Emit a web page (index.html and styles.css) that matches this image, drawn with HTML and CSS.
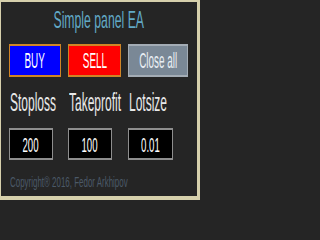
FILE: index.html
```html
<!DOCTYPE html>
<html>
<head>
<meta charset="utf-8">
<link rel="stylesheet" href="styles.css">
</head>
<body>
<div class="panel">
  <div class="title"><span class="t t-title">Simple panel EA</span></div>
  <div class="row buttons">
    <div class="btn btn-buy"><span class="t t-btn">BUY</span></div>
    <div class="btn btn-sell"><span class="t t-btn">SELL</span></div>
    <div class="btn btn-close"><span class="t t-btn">Close all</span></div>
  </div>
  <div class="row labels">
    <div class="label"><span class="t t-label">Stoploss</span></div>
    <div class="label"><span class="t t-label">Takeprofit</span></div>
    <div class="label"><span class="t t-label">Lotsize</span></div>
  </div>
  <div class="row inputs">
    <div class="field"><span class="t t-field">200</span></div>
    <div class="field"><span class="t t-field">100</span></div>
    <div class="field field-wide"><span class="t t-field">0.01</span></div>
  </div>
  <div class="copy"><span class="t t-copy">Copyright® 2016, Fedor Arkhipov</span></div>
</div>
</body>
</html>
```

FILE: styles.css
```css
html, body {
  margin: 0;
  padding: 0;
  overflow: hidden;
  background: #252525;
}

.panel {
  width: 200px;
  height: 200px;
  box-sizing: border-box;
  background: #252525;
  border-style: solid;
  border-color: #d6d0ac;
  border-width: 2px 3px 4px 1px;
  padding: 6px 8px 0 8px;
  font-family: "Liberation Sans", Arial, sans-serif;
  white-space: nowrap;
}

.t {
  display: inline-block;
  white-space: nowrap;
}

.title {
  height: 24px;
  line-height: 24px;
  font-size: 24px;
  text-align: center;
  color: #62a9c6;
}

.t-title {
  transform: scaleX(0.51);
  transform-origin: 50% 50%;
}

.row {
  display: grid;
  grid-template-columns: 52px 53px 60px;
  column-gap: 7px;
}

.buttons {
  margin-top: 12px;
}

.btn {
  height: 33px;
  box-sizing: border-box;
  border-style: solid;
  border-width: 2px 1px;
  display: flex;
  align-items: center;
  justify-content: center;
  font-size: 22px;
  line-height: 22px;
  color: #ffffff;
}

.btn-buy {
  background: #0000ff;
  border-color: #cf8526;
}

.btn-sell {
  background: #ff0000;
  border-color: #cf8526;
}

.btn-close {
  background: #7a8896;
  border-color: #a3acb5;
  color: #e8eef3;
}

.t-btn {
  transform: scaleX(0.45);
  transform-origin: 50% 50%;
}

.labels {
  margin-top: 12px;
  height: 26px;
  font-size: 25px;
  line-height: 26px;
  color: #e8e8e8;
}

.label {
  padding-left: 1px;
}

.t-label {
  transform: scaleX(0.48);
  transform-origin: 0 50%;
}

.inputs {
  margin-top: 13px;
}

.field {
  width: 44px;
  height: 32px;
  box-sizing: border-box;
  background: #000000;
  border-style: solid;
  border-color: #8e8e8e;
  border-width: 2px 1px;
  display: flex;
  align-items: center;
  justify-content: center;
  font-size: 21px;
  line-height: 21px;
  color: #ffffff;
}

.field-wide {
  width: 45px;
}

.t-field {
  transform: scaleX(0.46);
  transform-origin: 50% 50%;
}

.copy {
  margin-top: 14px;
  padding-left: 1px;
  font-size: 15px;
  line-height: 16px;
  color: #4b5968;
}

.t-copy {
  transform: scaleX(0.53);
  transform-origin: 0 50%;
}
```
